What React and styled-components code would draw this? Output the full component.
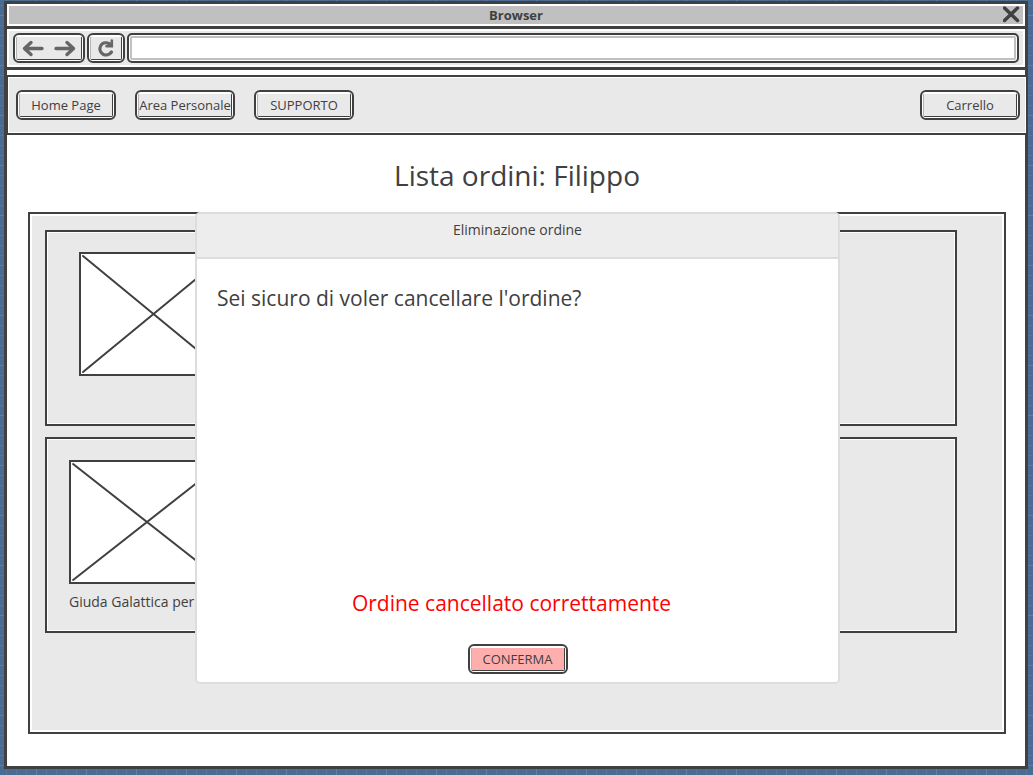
import React from "react";
import styled, { createGlobalStyle } from "styled-components";

const ink = "#404040";
const fill = "#e9e9e9";

const GlobalStyle = createGlobalStyle`
  *, *::before, *::after { box-sizing: border-box; }
  body {
    margin: 0;
    color: ${ink};
    font-family: "Comic Sans MS", "Open Sans", sans-serif;
    font-size: 13px;
    line-height: 20px;
    background-color: #4a6b92;
    background-image:
      linear-gradient(#5f7fa7 1px, transparent 1px),
      linear-gradient(90deg, #5f7fa7 1px, transparent 1px),
      linear-gradient(#55759c 1px, transparent 1px),
      linear-gradient(90deg, #55759c 1px, transparent 1px);
    background-size: 50px 50px, 50px 50px, 10px 10px, 10px 10px;
    background-position: 0 15px, 36px 0, 0 5px, 6px 0;
  }
  button, input { font: inherit; color: inherit; }
  h1, h2, p { margin: 0; font-weight: 400; }
`;

const Page = styled.div`
  padding: 1px 5px 6px 4px;
`;

const BrowserWindow = styled.div`
  border: 3px solid ${ink};
  background: #fff;
`;

const TitleBar = styled.header`
  display: grid;
  grid-template-columns: 20px 1fr 20px;
  align-items: center;
  height: 22px;
  border: 2px solid #fff;
  background: #c0c0c0;
`;

const WindowTitle = styled.div`
  grid-column: 2;
  text-align: center;
  font-weight: 700;
  line-height: 18px;
`;

const CloseButton = styled.button`
  display: flex;
  padding: 0;
  border: 0;
  background: none;
`;

const Toolbar = styled.div`
  display: flex;
  gap: 2px;
  height: 44px;
  padding: 4px 6px;
  border: solid ${ink};
  border-width: 3px 0;
  background: ${fill};
  box-shadow: inset 0 0 0 2px #fff;
`;

const SketchFrame = styled.span`
  display: flex;
  flex: 1;
  align-items: center;
  justify-content: center;
  border: 1px solid;
  border-color: #fff ${ink} ${ink} #b4b4b4;
  border-radius: 2px;
  background: ${(p) => p.$fill || fill};
`;

const SketchButton = styled.button`
  display: flex;
  flex: none;
  align-items: stretch;
  width: ${(p) => p.$width || 100}px;
  height: 30px;
  padding: 1px;
  border: 2px solid ${ink};
  border-radius: 6px;
  background: #fff;
  white-space: nowrap;
  font-size: 13px;
  line-height: 20px;
`;

const HistoryGroup = styled.div`
  display: flex;
  width: 72px;
  height: 30px;
  padding: 1px;
  border: 2px solid ${ink};
  border-radius: 6px;
  background: #fff;
`;

const HistoryButton = styled.button`
  display: flex;
  flex: 1;
  align-items: center;
  justify-content: center;
  padding: 0;
  border: 0;
  background: none;
`;

const AddressBox = styled.input`
  flex: 1;
  min-width: 0;
  height: 30px;
  padding: 0 8px;
  border: 2px solid ${ink};
  border-radius: 5px;
  background: #fff;
  box-shadow: inset 0 0 0 1px #fff, inset 0 0 0 3px #c0c0c0;
  outline: 0;
`;

const NavBar = styled.nav`
  display: flex;
  gap: 19px;
  margin: 5px -3px 0 -1px;
  padding: 13px 6px 13px 8px;
  border: 2px solid ${ink};
  background: ${fill};
  box-shadow: inset 0 0 0 1px #fff;
`;

const Spacer = styled.div`
  flex: 1;
`;

const Main = styled.main`
  position: relative;
  padding: 20px 19px 32px 21px;
`;

const PageTitle = styled.h1`
  margin-bottom: 17px;
  text-align: center;
  font-size: 28px;
  line-height: 40px;
`;

const OrderPanel = styled.section`
  display: flex;
  flex-direction: column;
  gap: 11px;
  min-height: 522px;
  padding: 16px 47px 16px 15px;
  border: 2px solid ${ink};
  background: ${fill};
  box-shadow: inset 0 0 0 2px #fff;
`;

const OrderCard = styled.article`
  min-height: 196px;
  padding: ${(p) => p.$padding};
  border: 2px solid ${ink};
  box-shadow: inset 0 0 0 1px #fff;
`;

const Cover = styled.svg`
  display: block;
  width: ${(p) => p.$width}px;
  height: 124px;
  margin-bottom: 8px;
  border: 2px solid ${ink};
  background: #fff;
`;

const Dialog = styled.section`
  position: absolute;
  top: 77px;
  right: 185px;
  left: 188px;
  display: flex;
  flex-direction: column;
  min-height: 472px;
  border: 2px solid #ddd;
  border-radius: 5px;
  background: #fff;
`;

const DialogHeader = styled.h2`
  height: 45px;
  padding-top: 6px;
  border-bottom: 2px solid #ddd;
  border-radius: 3px 3px 0 0;
  background: #ededed;
  text-align: center;
  font-size: 14px;
  line-height: 20px;
`;

const DialogBody = styled.div`
  display: flex;
  flex: 1;
  flex-direction: column;
  align-items: center;
  padding: 24px 20px 8px;
  font-size: 21px;
  line-height: 30px;
`;

const Question = styled.p`
  align-self: flex-start;
`;

const Outcome = styled.p`
  margin: auto 12px 26px 0;
  color: #f00;
`;

const Caption = styled.p`
  font-size: 14px;
`;

const glyph = {
  fill: "none",
  stroke: "#666",
  strokeWidth: 3,
  strokeLinecap: "round",
  strokeLinejoin: "round",
  "aria-hidden": true,
};

function ActionButton({ children, fill: color, width, label }) {
  return (
    <SketchButton type="button" $width={width} aria-label={label}>
      <SketchFrame $fill={color}>{children}</SketchFrame>
    </SketchButton>
  );
}

function Placeholder({ width }) {
  return (
    <Cover $width={width} viewBox="0 0 144 120" preserveAspectRatio="none" role="img" aria-label="Copertina">
      <path d="M2 2L142 118M2 118L142 2" fill="none" stroke={ink} strokeWidth="2" strokeLinecap="round" vectorEffect="non-scaling-stroke" />
    </Cover>
  );
}

export default function App() {
  return (
    <Page>
      <GlobalStyle />
      <BrowserWindow>
        <TitleBar>
          <WindowTitle>Browser</WindowTitle>
          <CloseButton type="button" aria-label="Chiudi">
            <svg width="18" height="18" viewBox="0 0 18 18" {...glyph} stroke={ink} strokeWidth="3.500">
              <path d="M1.500 2L14.500 14.500M14.500 2L1.500 14.500" />
            </svg>
          </CloseButton>
        </TitleBar>
        <Toolbar>
          <HistoryGroup>
            <SketchFrame>
              <HistoryButton type="button" aria-label="Indietro">
                <svg width="22" height="18" viewBox="0 0 22 18" {...glyph} strokeWidth="3.400">
                  <path d="M20 9.500H2.500M9 3.500L2.500 9.500L9 15.500" />
                </svg>
              </HistoryButton>
              <HistoryButton type="button" aria-label="Avanti">
                <svg width="22" height="18" viewBox="0 0 22 18" {...glyph} strokeWidth="3.400">
                  <path d="M2 9.500H19.500M13 3.500L19.500 9.500L13 15.500" />
                </svg>
              </HistoryButton>
            </SketchFrame>
          </HistoryGroup>
          <ActionButton width={38} label="Ricarica">
            <svg width="18" height="20" viewBox="0 0 18 20" {...glyph} strokeLinejoin="miter">
              <path d="M14.500 14C12.500 17 9 17.500 6.500 16.500C3.500 15 2.200 11.500 3.200 9C4.200 6 7 4.500 9.700 4.800C11.500 5 12.800 5.800 13.800 7" strokeWidth="3.200" />
              <path d="M14.800 2.500V8.200H9.500" strokeWidth="2.600" />
            </svg>
          </ActionButton>
          <AddressBox type="text" aria-label="Indirizzo" />
        </Toolbar>
        <NavBar>
          <ActionButton>Home Page</ActionButton>
          <ActionButton>Area Personale</ActionButton>
          <ActionButton>SUPPORTO</ActionButton>
          <Spacer />
          <ActionButton>Carrello</ActionButton>
        </NavBar>
        <Main>
          <PageTitle>Lista ordini: Filippo</PageTitle>
          <OrderPanel>
            <OrderCard $padding="20px 32px">
              <Placeholder width={149} />
            </OrderCard>
            <OrderCard $padding="21px 22px 18px">
              <Placeholder width={156} />
              <Caption>Giuda Galattica per</Caption>
            </OrderCard>
          </OrderPanel>
          <Dialog role="dialog" aria-labelledby="dialog-title">
            <DialogHeader id="dialog-title">Eliminazione ordine</DialogHeader>
            <DialogBody>
              <Question>Sei sicuro di voler cancellare l'ordine?</Question>
              <Outcome role="status">Ordine cancellato correttamente</Outcome>
              <ActionButton fill="#ffaeae">CONFERMA</ActionButton>
            </DialogBody>
          </Dialog>
        </Main>
      </BrowserWindow>
    </Page>
  );
}
